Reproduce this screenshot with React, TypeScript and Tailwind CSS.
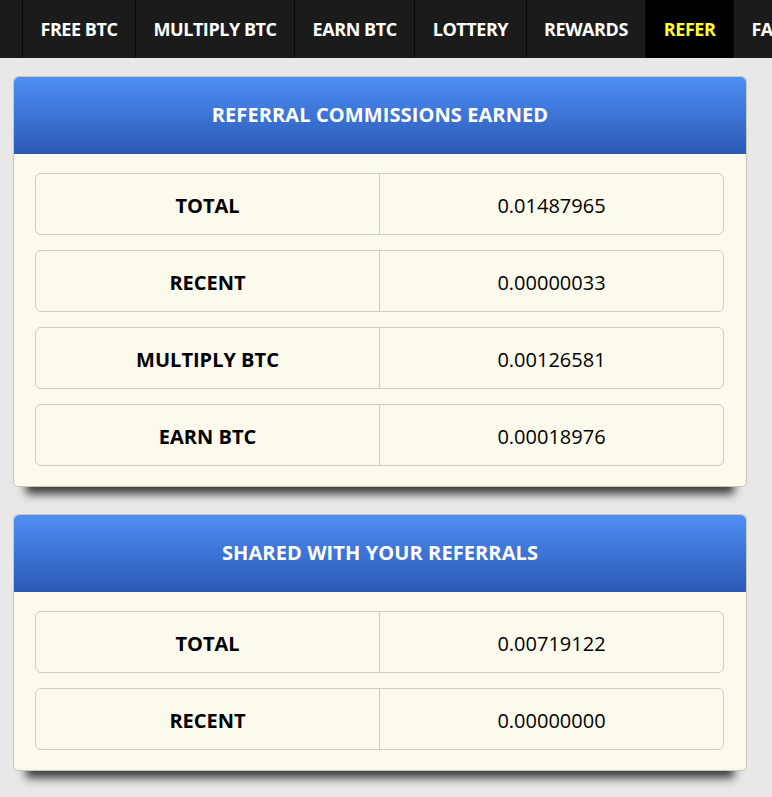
import React from 'react';

const navItems = ['FREE BTC', 'MULTIPLY BTC', 'EARN BTC', 'LOTTERY', 'REWARDS', 'REFER', 'FAQ', 'STATS'];

const commissions = [
  { label: 'TOTAL', value: '0.01487965' },
  { label: 'RECENT', value: '0.00000033' },
  { label: 'MULTIPLY BTC', value: '0.00126581' },
  { label: 'EARN BTC', value: '0.00018976' },
];

const shared = [
  { label: 'TOTAL', value: '0.00719122' },
  { label: 'RECENT', value: '0.00000000' },
];

const Panel = ({ title, rows }: { title: string; rows: { label: string; value: string }[] }) => (
  <div className="rounded-[5px] border border-[#c9c6b8] bg-[#fcfaec] shadow-[0_20px_9px_-13px_rgba(0,0,0,0.75)]">
    <div className="flex h-[77px] items-center justify-center rounded-t-[5px] border-b border-[#2b55ad] bg-gradient-to-b from-[#4f8ff6] to-[#2c5ab6] text-[20px] font-bold tracking-[0.1px] text-white">
      {title}
    </div>
    <div className="flex flex-col gap-[15px] pt-[19px] pb-[20px] pl-[21px] pr-[22px]">
      {rows.map(row => (
        <div key={row.label + row.value} className="flex h-[62px] rounded-[6px] border border-[#cfcbc0] text-[20px] text-black">
          <div className="flex flex-1 items-center justify-center border-r border-[#cfcbc0] pt-[3px] font-bold">{row.label}</div>
          <div className="flex flex-1 items-center justify-center pt-[3px]">{row.value}</div>
        </div>
      ))}
    </div>
  </div>
);

export default function App() {
  return (
    <div className="min-h-[797px] bg-[#e8e8e8] font-['Open_Sans',sans-serif]">
      <nav className="flex h-[58px] overflow-hidden whitespace-nowrap bg-[#1b1b1b] pl-[22px]">
        {navItems.map((item, i) => (
          <div
            key={item}
            className={`flex items-center px-[17.5px] text-[18px] font-bold tracking-[-0.45px] border-r border-[#0a0a0a] ${i === 0 ? 'border-l' : ''} ${item === 'REFER' ? 'bg-black text-[#ffff33]' : 'text-white'}`}
          >
            {item}
          </div>
        ))}
      </nav>
      <div className="flex flex-col gap-[27px] pt-[18px] pl-[13px] pr-[25px] pb-[25px]">
        <Panel title="REFERRAL COMMISSIONS EARNED" rows={commissions} />
        <Panel title="SHARED WITH YOUR REFERRALS" rows={shared} />
      </div>
    </div>
  );
}
